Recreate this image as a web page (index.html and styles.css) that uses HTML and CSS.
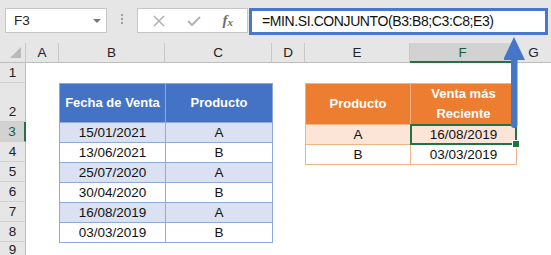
FILE: index.html
```html
<!DOCTYPE html>
<html lang="es">
    <head>
        <meta charset="utf-8" />
        <title>MIN.SI.CONJUNTO</title>
        <link rel="stylesheet" href="styles.css">
    </head>
    <body>
        <div class="app">
            <div class="topbar">
                <div class="namebox">
                    <span>F3</span>
                    <span class="caret"></span>
                </div>
                <div class="dots"><i></i><i></i><i></i></div>
                <div class="fxbox">
                    <svg class="ico" width="14" height="14" viewBox="0 0 14 14">
                        <path d="M2 2 L12 12 M12 2 L2 12" stroke="#b4b4b4" stroke-width="1.6" fill="none" />
                    </svg>
                    <svg class="ico" width="16" height="14" viewBox="0 0 16 14">
                        <path d="M2 7 L6 11 L14 3" stroke="#b4b4b4" stroke-width="2" fill="none" />
                    </svg>
                    <span class="fx">f<sub>x</sub></span>
                </div>
                <div class="formula">=MIN.SI.CONJUNTO(B3:B8;C3:C8;E3)</div>
            </div>

            <div class="sheet">
                <div class="corner"><span></span></div>
                <div class="colhead">A</div>
                <div class="colhead">B</div>
                <div class="colhead">C</div>
                <div class="colhead">D</div>
                <div class="colhead">E</div>
                <div class="colhead active">F</div>
                <div class="colhead last">G</div>

                <div class="rowhead r1">1</div>
                <div class="rowhead r2 tall">2</div>
                <div class="rowhead r3 active">3</div>
                <div class="rowhead r4">4</div>
                <div class="rowhead r5">5</div>
                <div class="rowhead r6">6</div>
                <div class="rowhead r7">7</div>
                <div class="rowhead r8">8</div>
                <div class="rowhead r9">9</div>

                <table class="tbl blue">
                    <colgroup><col style="width:106px"><col style="width:107px"></colgroup>
                    <tr class="head"><th>Fecha de Venta</th><th>Producto</th></tr>
                    <tr class="band"><td>15/01/2021</td><td>A</td></tr>
                    <tr><td>13/06/2021</td><td>B</td></tr>
                    <tr class="band"><td>25/07/2020</td><td>A</td></tr>
                    <tr><td>30/04/2020</td><td>B</td></tr>
                    <tr class="band"><td>16/08/2019</td><td>A</td></tr>
                    <tr><td>03/03/2019</td><td>B</td></tr>
                </table>

                <table class="tbl orange">
                    <colgroup><col style="width:105px"><col style="width:106px"></colgroup>
                    <tr class="head"><th>Producto</th><th>Venta más<br>Reciente</th></tr>
                    <tr class="band"><td>A</td><td class="sel">16/08/2019</td></tr>
                    <tr><td>B</td><td>03/03/2019</td></tr>
                </table>
            </div>

            <svg class="arrow" width="24" height="96" viewBox="0 0 24 96">
                <polygon points="10,2 21,25 -1,25" fill="#4676c8" />
                <rect x="7" y="22" width="6.5" height="71" rx="3.2" fill="#4676c8" />
            </svg>
        </div>
    </body>
</html>
```

FILE: styles.css
```css
* {
    padding: 0;
    margin: 0;
    box-sizing: border-box;
}
body {
    width: 551px;
    height: 255px;
    overflow: hidden;
    background: #fff;
    font-family: "Liberation Sans", Arial, sans-serif;
    -webkit-font-smoothing: antialiased;
}
.app {
    position: relative;
    width: 551px;
    height: 255px;
    overflow: hidden;
}

/* formula bar */
.topbar {
    display: flex;
    align-items: flex-start;
    height: 43px;
    padding: 8px 0 0 5px;
    background: #e6e6e6;
}
.namebox {
    display: flex;
    align-items: center;
    justify-content: space-between;
    width: 102px;
    height: 25px;
    padding: 0 5px 0 8px;
    background: #fff;
    border: 1px solid #c6c6c6;
    font-size: 13.5px;
    color: #222;
}
.namebox .caret {
    width: 0;
    height: 0;
    border-left: 4px solid transparent;
    border-right: 4px solid transparent;
    border-top: 4px solid #777;
}
.dots {
    display: flex;
    flex-direction: column;
    gap: 2px;
    width: 30px;
    padding: 6px 0 0 14px;
}
.dots i {
    width: 2px;
    height: 2px;
    background: #a0a0a0;
}
.fxbox {
    display: flex;
    align-items: center;
    justify-content: space-between;
    width: 111px;
    height: 25px;
    padding: 0 14px 0 14px;
    background: #fff;
    border: 1px solid #c6c6c6;
}
.fxbox .fx {
    font-family: "Liberation Serif", serif;
    font-style: italic;
    font-weight: bold;
    font-size: 15px;
    color: #6e6e6e;
}
.fxbox .fx sub {
    font-size: 11px;
    vertical-align: -1px;
}
.formula {
    width: 299px;
    height: 27px;
    margin-left: 1px;
    padding: 0 0 0 10px;
    background: #fff;
    border: 3px solid #4a78c7;
    font-size: 14px;
    letter-spacing: -0.4px;
    line-height: 21px;
    color: #111;
}

/* sheet */
.sheet {
    display: grid;
    grid-template-columns: 26px 33px 106px 107px 33px 105px 106px 1fr;
    grid-template-rows: 20px 20px 39px repeat(6, 20px) 1fr;
    height: 212px;
    font-size: 13.5px;
    color: #111;
}
.corner {
    position: relative;
    background: #e6e6e6;
    border-right: 1px solid #c8c8c8;
    border-bottom: 1px solid #bdbdbd;
}
.corner span {
    position: absolute;
    right: 4px;
    bottom: 4px;
    width: 0;
    height: 0;
    border-left: 11px solid transparent;
    border-bottom: 11px solid #b9b9b9;
}
.colhead {
    display: flex;
    align-items: center;
    justify-content: center;
    background: #e6e6e6;
    border-right: 1px solid #c8c8c8;
    border-bottom: 1px solid #bdbdbd;
    font-size: 13.5px;
    color: #222;
}
.colhead.last {
    border-right: none;
}
.colhead.active {
    background: #d2d2d2;
    border-bottom: 2px solid #217346;
    color: #1e5c39;
}
.rowhead {
    grid-column: 1;
    display: flex;
    align-items: center;
    justify-content: center;
    background: #e6e6e6;
    border-right: 1px solid #bdbdbd;
    border-bottom: 1px solid #d0d0d0;
    font-size: 13.5px;
    color: #222;
}
.rowhead.tall {
    align-items: flex-end;
    padding-bottom: 2px;
}
.rowhead.active {
    background: #d2d2d2;
    border-right: 2px solid #217346;
    color: #1e5c39;
}
.r1 { grid-row: 2; }
.r2 { grid-row: 3; }
.r3 { grid-row: 4; }
.r4 { grid-row: 5; }
.r5 { grid-row: 6; }
.r6 { grid-row: 7; }
.r7 { grid-row: 8; }
.r8 { grid-row: 9; }
.r9 { grid-row: 10; }

/* tables */
.tbl {
    border-collapse: collapse;
    table-layout: fixed;
    width: 100%;
    height: 100%;
}
.tbl th,
.tbl td {
    text-align: center;
    vertical-align: middle;
    padding: 0;
    height: 20px;
}
.tbl .head th {
    height: 39px;
    font-weight: bold;
    font-size: 13px;
    line-height: 20px;
    color: #fff;
}
.tbl.blue {
    grid-column: 3 / 5;
    grid-row: 3 / 10;
}
.tbl.blue th,
.tbl.blue td {
    border: 1px solid #8eaadb;
}
.tbl.blue .head th {
    background: #4472c4;
}
.tbl.blue .band td {
    background: #d9e1f2;
}
.tbl.orange {
    grid-column: 6 / 8;
    grid-row: 3 / 6;
}
.tbl.orange th,
.tbl.orange td {
    border: 1px solid #f4b183;
}
.tbl.orange .head th {
    background: #ed7d31;
}
.tbl.orange .band td {
    background: #fce4d6;
}
.tbl td.sel {
    position: relative;
}
.tbl td.sel::before {
    content: "";
    position: absolute;
    left: -1px;
    top: -1px;
    right: -1px;
    bottom: -1px;
    border: 2px solid #217346;
}
.tbl td.sel::after {
    content: "";
    position: absolute;
    right: -4px;
    bottom: -4px;
    width: 6px;
    height: 6px;
    background: #217346;
    border: 1px solid #fff;
}

/* callout arrow */
.arrow {
    position: absolute;
    left: 504px;
    top: 35px;
}
```
